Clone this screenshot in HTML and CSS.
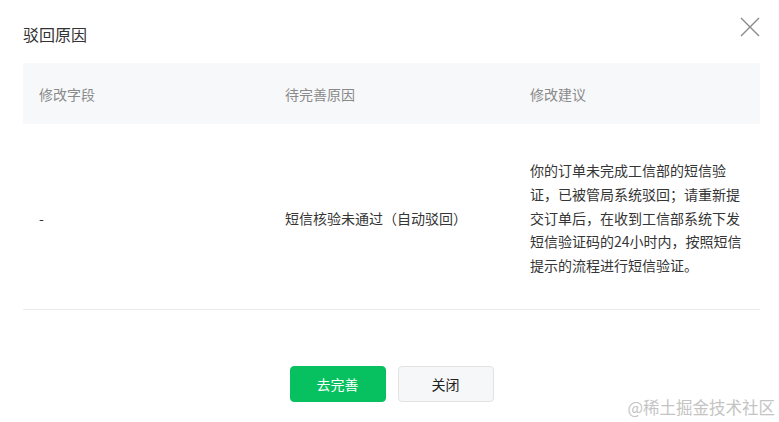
FILE: index.html
```html
<!DOCTYPE html>
<html lang="zh-CN">
<head>
<meta charset="utf-8">
<title>驳回原因</title>
<link rel="stylesheet" href="styles.css">
</head>
<body>
<div class="dialog">
  <div class="dialog-header">
    <h1 class="dialog-title">驳回原因</h1>
    <button class="close-btn" aria-label="关闭">
      <svg width="20" height="20" viewBox="0 0 20 20"><path d="M1 1L19 19M19 1L1 19" stroke="#8a8a8a" stroke-width="1.4" fill="none"/></svg>
    </button>
  </div>
  <table class="reason-table">
    <colgroup><col class="c1"><col class="c2"><col class="c3"></colgroup>
    <thead>
      <tr><th>修改字段</th><th>待完善原因</th><th>修改建议</th></tr>
    </thead>
    <tbody>
      <tr>
        <td>-</td>
        <td>短信核验未通过（自动驳回）</td>
        <td>你的订单未完成工信部的短信验证，已被管局系统驳回；请重新提交订单后，在收到工信部系统下发短信验证码的24小时内，按照短信提示的流程进行短信验证。</td>
      </tr>
    </tbody>
  </table>
  <div class="dialog-footer">
    <button class="btn btn-primary">去完善</button>
    <button class="btn btn-default">关闭</button>
  </div>
</div>
<div class="watermark">@稀土掘金技术社区</div>
</body>
</html>
```
FILE: styles.css
```css
html, body {
  margin: 0;
  padding: 0;
  background: #fff;
}
body {
  font-family: "Noto Sans CJK SC", "Noto Sans", sans-serif;
  color: #353535;
  width: 779px;
  height: 422px;
  overflow: hidden;
  position: relative;
}
.dialog {
  padding: 0 19px 0 23px;
}
.dialog-header {
  display: flex;
  justify-content: space-between;
  align-items: flex-start;
  padding-top: 17px;
}
.dialog-title {
  margin: 7px 0 0;
  font-size: 16px;
  line-height: 20px;
  font-weight: 400;
  color: #333;
}
.close-btn {
  border: 0;
  background: none;
  padding: 0;
  width: 20px;
  height: 20px;
  display: block;
  cursor: pointer;
}
.close-btn svg { display: block; }
.reason-table {
  margin-top: 19px;
  width: 737px;
  border-collapse: collapse;
  table-layout: fixed;
  font-size: 14px;
}
.c1 { width: 246px; }
.c2 { width: 245px; }
.c3 { width: 246px; }
.reason-table th {
  background: #f7f8fa;
  height: 61px;
  padding: 0 16px;
  text-align: left;
  font-weight: 400;
  color: #8a8a8a;
  line-height: 20px;
}
.reason-table td {
  padding: 35px 16px 31px;
  vertical-align: middle;
  line-height: 23.8px;
  color: #353535;
  border-bottom: 1px solid #ececec;
}
.dialog-footer {
  margin-top: 56px;
  display: flex;
  justify-content: center;
  gap: 12px;
}
.btn {
  width: 96px;
  height: 36px;
  border-radius: 4px;
  font-family: inherit;
  font-size: 14px;
  box-sizing: border-box;
  padding: 0;
  cursor: pointer;
}
.btn-primary {
  background: #07c160;
  border: 1px solid #07c160;
  color: #fff;
}
.btn-default {
  background: #f6f7f8;
  border: 1px solid #e2e2e2;
  color: #222;
}
.watermark {
  position: absolute;
  right: 4px;
  bottom: 4px;
  font-family: "Noto Sans CJK SC", serif;
  font-size: 16.5px;
  line-height: 22px;
  color: #c4c4c4;
  letter-spacing: 0;
}
```
